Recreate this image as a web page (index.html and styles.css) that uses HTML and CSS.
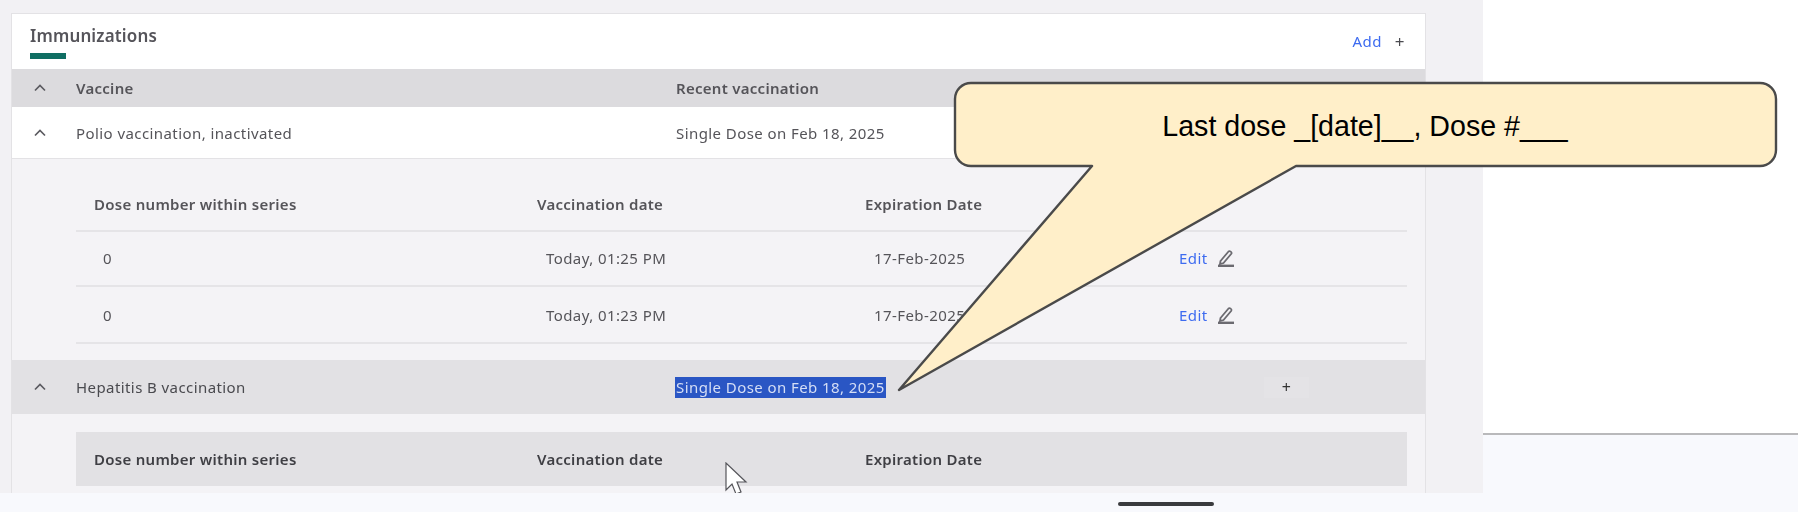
FILE: index.html
```html
<!DOCTYPE html>
<html lang="en">
<head>
    <meta charset="UTF-8">
    <meta name="viewport" content="width=device-width, initial-scale=1.0">
    <title>Immunizations</title>
    <link rel="stylesheet" href="styles.css">
</head>
<body>

    <div class="screen">
        <!-- Main app area -->
        <main class="app">
            <section class="card">
                <div class="card-head">
                    <div>
                        <h2>Immunizations</h2>
                        <div class="accent"></div>
                    </div>
                    <div class="add"><a href="#">Add</a><span class="plus">+</span></div>
                </div>

                <div class="row row-head">
                    <svg class="chevron" viewBox="0 0 12 8"><path d="M1 6.5 6 1.5l5 5"/></svg>
                    <span>Vaccine</span>
                    <span>Recent vaccination</span>
                </div>

                <div class="row row-white">
                    <svg class="chevron" viewBox="0 0 12 8"><path d="M1 6.5 6 1.5l5 5"/></svg>
                    <span>Polio vaccination, inactivated</span>
                    <span>Single Dose on Feb 18, 2025</span>
                </div>

                <div class="panel">
                    <div class="dose-table">
                        <div class="dose-row dose-head">
                            <span>Dose number within series</span>
                            <span>Vaccination date</span>
                            <span>Expiration Date</span>
                            <span></span>
                        </div>
                        <div class="dose-row dose-one">
                            <span>0</span>
                            <span>Today, 01:25 PM</span>
                            <span>17-Feb-2025</span>
                            <span class="edit"><a href="#">Edit</a>
                                <svg class="pencil" viewBox="0 0 18 18"><path d="M3.500 12 11.500 2.500c1.200-1.200 3.800.8 2.800 2.300L6.500 14l-3.500 1z"/><path class="pencil-base" d="M1 16.800h16"/></svg>
                            </span>
                        </div>
                        <div class="dose-row dose-two">
                            <span>0</span>
                            <span>Today, 01:23 PM</span>
                            <span>17-Feb-2025</span>
                            <span class="edit"><a href="#">Edit</a>
                                <svg class="pencil" viewBox="0 0 18 18"><path d="M3.500 12 11.500 2.500c1.200-1.200 3.800.8 2.800 2.300L6.500 14l-3.500 1z"/><path class="pencil-base" d="M1 16.800h16"/></svg>
                            </span>
                        </div>
                    </div>
                </div>

                <div class="row row-band">
                    <svg class="chevron" viewBox="0 0 12 8"><path d="M1 6.5 6 1.5l5 5"/></svg>
                    <span>Hepatitis B vaccination</span>
                    <span class="picked">Single Dose on Feb 18, 2025</span>
                    <span class="band-btn">+</span>
                </div>

                <div class="panel panel-last">
                    <div class="dose-table">
                        <div class="dose-row dose-head dose-head-grey">
                            <span>Dose number within series</span>
                            <span>Vaccination date</span>
                            <span>Expiration Date</span>
                            <span></span>
                        </div>
                    </div>
                </div>
            </section>

            <!-- mouse pointer from the recording -->
            <svg class="pointer" viewBox="0 0 26 34"><path d="M1 1v27l6-6 4 10 5-2-4-10h9z"/></svg>
        </main>

        <div class="side"></div>
    </div>

    <footer class="strip"><div class="handle"></div></footer>

    <!-- annotation callout -->
    <svg class="callout" viewBox="0 0 1798 512">
        <path d="M971 83H1760a16 16 0 0 1 16 16V150a16 16 0 0 1-16 16H1296L899 390 1092 166H971a16 16 0 0 1-16-16V99a16 16 0 0 1 16-16z"/>
        <text x="1365" y="136" text-anchor="middle">Last dose _[date]__, Dose #___</text>
    </svg>

</body>
</html>
```

FILE: styles.css
```css
* {
    box-sizing: border-box;
}

html, body {
    margin: 0;
    padding: 0;
}

body {
    position: relative;
    width: 1798px;
    height: 512px;
    overflow: hidden;
    background: #f8f9fd;
    font-family: "Noto Sans", Roboto, sans-serif;
    font-size: 15px;
    letter-spacing: 0.42px;
    color: #555459;
}

a {
    color: #3d6bf0;
    text-decoration: none;
}

.screen {
    display: flex;
    height: 493px;
}

.app {
    position: relative;
    width: 1483px;
    height: 493px;
    padding: 13px 57px 0 11px;
    overflow: hidden;
    background: #f2f1f4;
    filter: blur(0.4px);
}

.side {
    flex: 1;
    height: 435px;
    background: #fff;
    border-bottom: 2px solid #b9b9bb;
}

.strip {
    height: 19px;
    padding: 9px 0 0 1118px;
}

.handle {
    width: 96px;
    height: 4px;
    border-radius: 2px;
    background: #3a3b3e;
}

/* Card */
.card {
    height: 480px;
    background: #f4f3f6;
    border: 1px solid #e3e2e5;
    border-bottom: none;
}

.card-head {
    display: flex;
    justify-content: space-between;
    height: 55px;
    padding: 12px 20px 0 18px;
    background: #fff;
}

.card-head h2 {
    margin: 0;
    font-size: 17px;
    font-weight: 600;
    line-height: 20px;
    letter-spacing: 0.15px;
    color: #55545a;
}

.accent {
    width: 36px;
    height: 6px;
    margin-top: 7px;
    background: #0f6e63;
}

.add {
    display: flex;
    gap: 13px;
    align-items: center;
    height: 30px;
}

.plus {
    font-size: 17px;
    color: #4b4b50;
}

.row {
    display: grid;
    grid-template-columns: 64px 600px 588px 45px;
    align-items: center;
}

.chevron {
    width: 12px;
    height: 8px;
    margin-left: 22px;
    fill: none;
    stroke: #5b5a60;
    stroke-width: 1.7;
}

.row-head {
    height: 38px;
    padding-bottom: 1px;
    background: #dcdbde;
    font-weight: 600;
    letter-spacing: 0.28px;
}

.row-white {
    height: 52px;
    background: #fff;
    border-bottom: 1px solid #e3e2e5;
}

.row-band {
    height: 54px;
    background: #e2e1e4;
    color: #4a4a4f;
}

.picked {
    justify-self: start;
    padding: 0 1px;
    margin-left: -1px;
    line-height: 21px;
    background: #2a56c4;
    color: #d5def5;
}

.band-btn {
    height: 21px;
    line-height: 21px;
    text-align: center;
    font-size: 16px;
    color: #333;
    background: #e4e3e6;
}

/* Dose tables */
.panel {
    padding: 19px 18px 0 64px;
}

.panel-last {
    padding-top: 18px;
}

.panel:not(.panel-last) {
    height: 201px;
}

.dose-row {
    display: grid;
    grid-template-columns: 443px 328px 314px 1fr;
    align-items: center;
    border-bottom: 2px solid #e5e4e7;
}

.dose-row span {
    padding-left: 27px;
}

.dose-head {
    height: 54px;
    font-weight: 600;
    letter-spacing: 0.28px;
}

.dose-row.dose-head span {
    padding-left: 18px;
}

.dose-one {
    height: 55px;
    padding-bottom: 1px;
}

.dose-two {
    height: 57px;
}

.dose-row .edit {
    display: flex;
    gap: 9px;
    align-items: center;
    padding-left: 18px;
}

.pencil {
    width: 18px;
    height: 18px;
    fill: none;
    stroke: #6b6a70;
    stroke-width: 1.8;
}

.pencil-base {
    stroke-width: 2.4;
}

.dose-head-grey {
    background: #e2e1e4;
    border-bottom: none;
    color: #3f3f44;
}

.pointer {
    position: absolute;
    left: 725px;
    top: 462px;
    width: 26px;
    height: 34px;
    fill: #fff;
    stroke: #55555a;
    stroke-width: 1.2;
}

.callout {
    position: absolute;
    left: 0;
    top: 0;
    width: 1798px;
    height: 512px;
}

.callout path {
    fill: #ffefc9;
    stroke: #4a4a4a;
    stroke-width: 2.4;
    stroke-linejoin: round;
}

.callout text {
    font-family: "Liberation Sans", Arial, sans-serif;
    font-size: 28.6px;
    letter-spacing: 0;
    fill: #000;
}
```
